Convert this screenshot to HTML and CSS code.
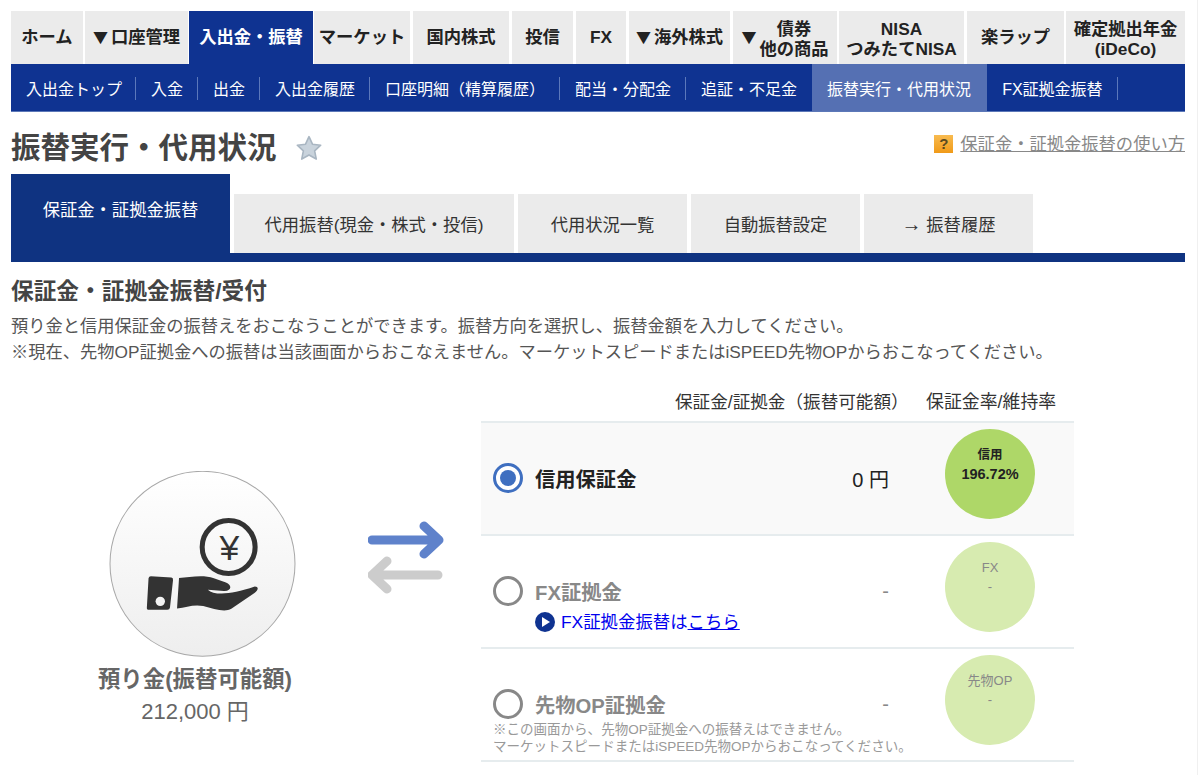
FILE: index.html
```html
<!DOCTYPE html>
<html lang="ja">
<head>
<meta charset="utf-8">
<title>振替実行・代用状況</title>
<link rel="stylesheet" href="styles.css">
</head>
<body>
<div class="page">
  <nav class="gnav">
    <a class="gnav-item w-home">ホーム</a>
    <a class="gnav-item w-acct"><span class="tri">▼</span>口座管理</a>
    <a class="gnav-item w-nyu is-active">入出金・振替</a>
    <a class="gnav-item w-mkt">マーケット</a>
    <a class="gnav-item w-jp">国内株式</a>
    <a class="gnav-item w-fund">投信</a>
    <a class="gnav-item w-fx">FX</a>
    <a class="gnav-item w-us"><span class="tri">▼</span>海外株式</a>
    <a class="gnav-item w-bond"><span class="tri">▼</span><span class="stack">債券<br>他の商品</span></a>
    <a class="gnav-item w-nisa"><span class="stack">NISA<br>つみたてNISA</span></a>
    <a class="gnav-item w-wrap">楽ラップ</a>
    <a class="gnav-item w-ideco"><span class="stack">確定拠出年金<br>(iDeCo)</span></a>
  </nav>
  <nav class="subnav">
    <a class="subnav-item first">入出金トップ</a>
    <a class="subnav-item">入金</a>
    <a class="subnav-item">出金</a>
    <a class="subnav-item">入出金履歴</a>
    <a class="subnav-item">口座明細（精算履歴）</a>
    <a class="subnav-item">配当・分配金</a>
    <a class="subnav-item no-line">追証・不足金</a>
    <a class="subnav-item is-active">振替実行・代用状況</a>
    <a class="subnav-item">FX証拠金振替</a>
  </nav>

  <header class="title-row">
    <h1 class="title">振替実行・代用状況</h1>
    <svg class="star" viewBox="0 0 24 24" aria-hidden="true"><path d="M12 1.5l3.2 7 7.6.9-5.6 5.2 1.5 7.6L12 18.400l-6.700 3.800 1.500-7.600L1.200 9.400l7.600-.9z" fill="#c9d3dc" stroke="#a9b6c2" stroke-width="1.500" stroke-linejoin="round"/></svg>
    <div class="help">
      <span class="help-icon">?</span>
      <a class="help-link">保証金・証拠金振替の使い方</a>
    </div>
  </header>

  <div class="tabs">
    <a class="tab tab-main is-active">保証金・証拠金振替</a>
    <a class="tab tab-a">代用振替(現金・株式・投信)</a>
    <a class="tab tab-b">代用状況一覧</a>
    <a class="tab tab-b">自動振替設定</a>
    <a class="tab tab-b"><span class="arr">→</span>&nbsp;振替履歴</a>
  </div>

  <h2 class="section-title">保証金・証拠金振替/受付</h2>
  <p class="lead">預り金と信用保証金の振替えをおこなうことができます。振替方向を選択し、振替金額を入力してください。<br>※現在、先物OP証拠金への振替は当該画面からおこなえません。マーケットスピードまたはiSPEED先物OPからおこなってください。</p>

  <section class="transfer">
    <div class="source">
      <svg class="source-icon" viewBox="60 33 556 555" aria-hidden="true">
        <defs>
          <linearGradient id="sourceBg" x1="0" y1="0" x2="0" y2="1">
            <stop offset="0" stop-color="#ffffff"/>
            <stop offset="1" stop-color="#eeeeee"/>
          </linearGradient>
        </defs>
        <circle cx="338" cy="310" r="276" fill="url(#sourceBg)" stroke="#a8a8a8" stroke-width="3"/>
        <circle cx="416" cy="260" r="79" fill="none" stroke="#333" stroke-width="15"/>
        <text class="yen" x="418" y="299" text-anchor="middle">¥</text>
        <path d="M184 347L245 351Q251 352 250 359L241 440Q240 447 233 447L178 447Q171 447 172 440L177 353Q178 347 184 347Z" fill="#333"/>
        <circle cx="212" cy="422" r="14" fill="#f3f3f3"/>
        <path d="M268 352C300 350 340 342 372 353L408 366C428 374 424 392 402 391L354 387C372 404 420 404 494 378C506 378 506 388 492 398L424 444C404 456 372 444 340 436C312 430 290 440 262 443Z" fill="#333"/>
      </svg>
      <div class="source-label">預り金(振替可能額)</div>
      <div class="source-amount">212,000 円</div>
    </div>

    <svg class="arrows" viewBox="0 0 76 74" aria-hidden="true">
      <path d="M4 19H70M56 5L71 19L56 33" fill="none" stroke="#5f82cb" stroke-width="9" stroke-linecap="round" stroke-linejoin="round"/>
      <path d="M70 54H4M19 40L4 54L19 68" fill="none" stroke="#cccccc" stroke-width="9" stroke-linecap="round" stroke-linejoin="round"/>
    </svg>

    <div class="accounts">
      <div class="accounts-head">
        <span class="head-amount">保証金/証拠金（振替可能額）</span>
        <span class="head-rate">保証金率/維持率</span>
      </div>

      <div class="row is-selected">
        <div class="row-main">
          <div class="row-line">
            <span class="radio is-on"></span>
            <span class="row-label">信用保証金</span>
            <span class="row-amount">0 円</span>
          </div>
        </div>
        <div class="gauge gauge-on">信用<br><span class="gauge-value">196.72%</span></div>
      </div>

      <div class="row is-muted">
        <div class="row-main">
          <div class="row-line line-fx">
            <span class="radio"></span>
            <span class="row-label">FX証拠金</span>
            <span class="row-amount">-</span>
          </div>
          <div class="fx-link">
            <svg class="play" viewBox="0 0 20 20" aria-hidden="true"><circle cx="10" cy="10" r="10" fill="#0f3391"/><path d="M7 5l8 5-8 5z" fill="#fff"/></svg>
            <span>FX証拠金振替は<a class="link">こちら</a></span>
          </div>
        </div>
        <div class="gauge">FX<br><span class="gauge-value">-</span></div>
      </div>

      <div class="row is-muted">
        <div class="row-main">
          <div class="row-line line-op">
            <span class="radio"></span>
            <span class="row-label">先物OP証拠金</span>
            <span class="row-amount">-</span>
          </div>
          <p class="note">※この画面から、先物OP証拠金への振替えはできません。<br>マーケットスピードまたはiSPEED先物OPからおこなってください。</p>
        </div>
        <div class="gauge">先物OP<br><span class="gauge-value">-</span></div>
      </div>
    </div>
  </section>
</div>
</body>
</html>
```

FILE: styles.css
```css
* { box-sizing: border-box; }
html, body { margin: 0; padding: 0; height: 100%; overflow: hidden; background: #fff; }
body {
  font-family: "Liberation Sans", "Noto Sans CJK JP", sans-serif;
  color: #333;
}
.page {
  width: 1198px;
  height: 775px;
  padding: 11px 12px 0 11px;
  border-right: 1px solid #f0f0f0;
  overflow: hidden;
}
p, h1, h2 { margin: 0; }

/* global nav */
.gnav { display: flex; height: 53px; }
.gnav-item {
  display: flex;
  align-items: center;
  justify-content: center;
  padding-bottom: 2px;
  background: #ebebeb;
  color: #222;
  font-size: 17.300px;
  font-weight: bold;
  line-height: 20px;
  white-space: nowrap;
  margin-right: 3px;
}
.gnav-item.is-active { background: #0f3391; color: #fff; margin-left: -2px; margin-right: 1px; }
.tri { font-family: "Noto Sans CJK JP", sans-serif; font-size: 15px; margin-right: 3px; }
.stack { text-align: center; display: block; padding-top: 4px; }
.w-home { width: 72px; margin-right: 2px; }
.w-acct { width: 103px; }
.w-nyu { width: 124px; }
.w-mkt { width: 96px; margin-right: 3px; }
.w-jp { width: 96px; }
.w-fund { width: 61px; }
.w-fx { width: 50px; }
.w-us { width: 101px; }
.w-bond { width: 104px; margin-right: 2px; }
.w-nisa { width: 125px; }
.w-wrap { width: 97px; margin-right: 2px; }
.w-ideco { width: 119px; margin-right: 0; }

/* sub nav */
.subnav {
  display: flex;
  height: 48px;
  background: #0f3391;
  align-items: stretch;
  border-bottom: 1px solid #5c78b8;
}
.subnav-item {
  position: relative;
  display: flex;
  align-items: center;
  padding: 0 15px;
  color: #fff;
  font-size: 16px;
  white-space: nowrap;
}
.subnav-item.first { padding-right: 14px; }
.subnav-item::after {
  content: "";
  position: absolute;
  right: 0;
  top: 13px;
  height: 23px;
  width: 1px;
  background: #5b78bb;
}
.subnav-item.no-line::after, .subnav-item.is-active::after { display: none; }
.subnav-item.is-active { background: #5570b3; padding-right: 16px; }

/* title */
.title-row { display: flex; align-items: center; height: 62px; padding-top: 9px; }
.title { font-size: 29.500px; font-weight: bold; color: #444; line-height: 36px; white-space: nowrap; }
.star { width: 26px; height: 26px; margin-left: 19px; }
.help { margin-left: auto; display: flex; align-items: center; margin-top: -7px; }
.help-icon {
  width: 19px;
  height: 18px;
  margin-right: 7px;
  background: linear-gradient(#f8bb50, #f09a18);
  color: #5a4a20;
  font-size: 15px;
  font-weight: bold;
  line-height: 18px;
  text-align: center;
}
.help-link { font-size: 17.300px; line-height: 22px; color: #888; text-decoration: underline; white-space: nowrap; }

/* tabs */
.tabs {
  display: flex;
  align-items: flex-end;
  height: 88px;
  border-bottom: 9px solid #0f3381;
  gap: 4px;
}
.tab {
  display: flex;
  align-items: center;
  justify-content: center;
  height: 59px;
  background: #ebebeb;
  color: #333;
  font-size: 17.300px;
  white-space: nowrap;
}
.arr { font-size: 20px; line-height: 20px; }
.tab-main { width: 219px; height: 79px; padding-bottom: 11px; background: #0f3381; color: #fff; }
.tab-a { width: 280px; }
.tab-b { width: 169px; }

/* intro */
.section-title { margin-top: 14px; font-size: 22.700px; line-height: 30px; font-weight: bold; color: #444; white-space: nowrap; }
.lead { margin-top: 7px; font-size: 17.250px; line-height: 26px; color: #555; white-space: nowrap; }

/* transfer */
.transfer { display: flex; align-items: flex-start; margin-top: 24px; }
.source { width: 382px; display: flex; flex-direction: column; align-items: center; padding: 82px 0 0 0; }
.source-icon { width: 187px; height: 186px; display: block; }
.yen { font-size: 106px; fill: #333; font-family: "Liberation Sans", sans-serif; }
.source-label { margin: 8px 14px 0 0; font-size: 22.400px; line-height: 30px; font-weight: bold; color: #666; white-space: nowrap; }
.source-amount { margin: 2px 14px 0 0; font-size: 22px; line-height: 30px; color: #666; white-space: nowrap; }
.arrows { width: 76px; height: 74px; margin: 132px 0 0 -25px; flex: none; }

.accounts { width: 593px; margin-left: 37px; }
.accounts-head { position: relative; height: 32px; font-size: 17.600px; line-height: 26px; color: #333; white-space: nowrap; }
.head-amount { position: absolute; left: 194px; top: 0; }
.head-rate { position: absolute; left: 445px; top: 0; font-size: 17.900px; }

.row {
  display: flex;
  height: 113px;
  border-top: 2px solid #e6ecee;
  position: relative;
}
.row:last-child { height: 115px; border-bottom: 2px solid #e6ecee; }
.row.is-selected { background: #f9f9f9; }
.row-main { flex: none; width: 408px; padding-left: 12px; position: relative; }
.row-line { display: flex; align-items: center; height: 30px; margin-top: 40px; }
.radio {
  width: 30px;
  height: 30px;
  border-radius: 50%;
  border: 3px solid #888;
  background: #fff;
  flex: none;
  position: relative;
}
.radio.is-on { border-color: #3f6fc0; }
.radio.is-on::after {
  content: "";
  position: absolute;
  left: 4px;
  top: 4px;
  width: 16px;
  height: 16px;
  border-radius: 50%;
  background: #3f6fc0;
}
.row-label { margin-left: 12px; font-size: 20.300px; font-weight: bold; color: #222; white-space: nowrap; }
.row-amount { margin-left: auto; font-size: 20px; color: #222; white-space: nowrap; }
.is-muted .row-label, .is-muted .row-amount { color: #888; }
.fx-link { display: flex; align-items: center; margin: 4px 0 0 42px; font-size: 17.400px; line-height: 24px; color: #0000ee; white-space: nowrap; }
.play { width: 20px; height: 20px; margin-right: 6px; flex: none; }
.link { text-decoration: underline; color: #0000ee; }
.note { margin-top: 2px; font-size: 13.530px; line-height: 17px; color: #999; white-space: nowrap; }

.gauge {
  width: 90px;
  height: 90px;
  margin: 6px 0 0 56px;
  padding-top: 16px;
  border-radius: 50%;
  background: #d7ebb0;
  color: #888;
  font-size: 13px;
  line-height: 19px;
  text-align: center;
  flex: none;
}
.gauge-on { background: #aed768; color: #222; font-size: 12.500px; font-weight: bold; padding-top: 17px; }
.gauge-on .gauge-value { font-size: 14.500px; }
```
